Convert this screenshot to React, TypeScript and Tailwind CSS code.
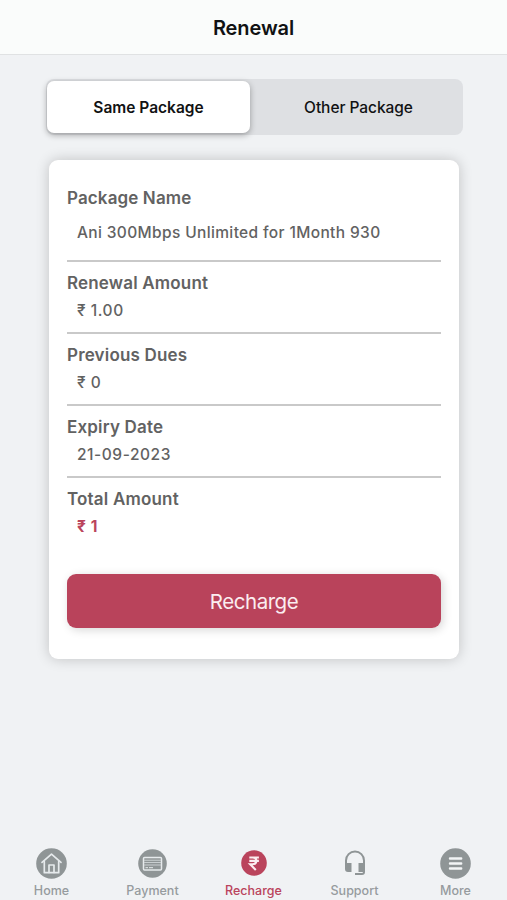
import { useState } from "react";
import type { ReactNode } from "react";

interface Detail {
  label: string;
  value: string;
}

const details: Detail[] = [
  { label: "Renewal Amount", value: "₹ 1.00" },
  { label: "Previous Dues", value: "₹ 0" },
  { label: "Expiry Date", value: "21-09-2023" },
];

function HomeIcon() {
  return (
    <svg width="31" height="31" viewBox="0 0 31 31" fill="none">
      <circle cx="15.5" cy="15.5" r="15.3" fill="#8f9596" />
      <g stroke="#e6eaec" strokeWidth="1.7" strokeLinejoin="round" strokeLinecap="round">
        <path d="M6 14.4 15.5 6.200l9.500 8.200" />
        <path d="M8.300 13.500v11.200h14.400V13.500" />
        <path d="M13 24.500v-7.500h5v7.500" />
      </g>
    </svg>
  );
}

function CardIcon() {
  return (
    <svg width="29" height="29" viewBox="0 0 29 29" fill="none">
      <circle cx="14.5" cy="14.5" r="14.3" fill="#8f9596" />
      <rect x="5.500" y="8.500" width="18" height="12.500" rx="1" stroke="#e6eaec" strokeWidth="1.500" />
      <path d="M6 11.300h17M6 13.500h17M6 16h17" stroke="#c9ced0" strokeWidth="1.100" />
      <path d="M7.500 18.700h2.500M11 18.700h4" stroke="#e6eaec" strokeWidth="1" />
    </svg>
  );
}

function RupeeIcon() {
  return (
    <svg width="26" height="26" viewBox="0 0 26 26" fill="none">
      <circle cx="13" cy="13" r="12.8" fill="#ba445c" />
      <path
        d="M8.300 7.500h9.600M8.300 10.900h9.600M8.600 7.500h3c2.600 0 3.700 1.400 3.700 3.300 0 2.100-1.500 3.500-3.900 3.500H9.200l5.600 5.700"
        stroke="#fbeef0"
        strokeWidth="2.100"
      />
    </svg>
  );
}

function HeadsetIcon() {
  return (
    <svg width="22" height="26" viewBox="0 0 22 26" fill="none">
      <path d="M2 15v-4.500a9 9 0 0 1 18 0V22c0 1.400-.8 2-2 2H11" stroke="#8f9596" strokeWidth="2" />
      <path d="M1 13h6.500v9H4a3 3 0 0 1-3-3zM14.500 13H21v9h-6.500z" fill="#8f9596" />
    </svg>
  );
}

function MenuIcon() {
  return (
    <svg width="31" height="31" viewBox="0 0 31 31" fill="none">
      <circle cx="15.5" cy="15.5" r="15.3" fill="#8f9596" />
      <path d="M10 10.500h11.200M10 15.500h11.200M10 20.500h11.200" stroke="#f3f5f6" strokeWidth="2.400" strokeLinecap="round" />
    </svg>
  );
}

interface NavItem {
  name: string;
  icon: ReactNode;
}

const navItems: NavItem[] = [
  { name: "Home", icon: <HomeIcon /> },
  { name: "Payment", icon: <CardIcon /> },
  { name: "Recharge", icon: <RupeeIcon /> },
  { name: "Support", icon: <HeadsetIcon /> },
  { name: "More", icon: <MenuIcon /> },
];

export default function App() {
  const [tab, setTab] = useState("Same Package");

  return (
    <div className="flex h-[900px] w-full flex-col bg-[#f0f2f4] font-['Inter',sans-serif]">
      {/* Header */}
      <header className="flex h-[55px] shrink-0 items-center justify-center border-b border-[#e0e2e3] bg-[#fafcfb] pt-[2px]">
        <h1 className="text-[20px] font-semibold tracking-[-0.1px] text-[#111213]">Renewal</h1>
      </header>

      <main className="flex-1">
        {/* Package switch */}
        <div className="mt-6 mr-11 ml-[46px] flex h-14 rounded-lg bg-[#dee0e3] p-px pt-[2px]">
          {["Same Package", "Other Package"].map((name) => (
            <button
              key={name}
              onClick={() => setTab(name)}
              className={`h-[52px] pt-[2px] text-[15.500px] text-[#111213] ${
                tab === name
                  ? "w-[203px] rounded-[7px] bg-white font-semibold shadow-[0_2px_6px_rgba(0,0,0,0.32)]"
                  : "flex-1 pl-[5px] font-medium tracking-[-0.05px]"
              }`}
            >
              {name}
            </button>
          ))}
        </div>

        {/* Renewal details */}
        <section className="mt-[25px] mr-12 ml-[49px] h-[499px] rounded-[9px] bg-white px-[18px] text-[#626262] shadow-[0_0_14px_rgba(0,0,0,0.2)]">
          <div className="h-[102px] border-b-2 border-[#c9c9c9] pt-[26px]">
            <p className="text-[17px] leading-6 font-semibold tracking-[0.12px]">Package Name</p>
            <p className="mt-[11px] pl-[10px] text-[15.500px] leading-6 font-[550] tracking-[0.36px]">
              Ani 300Mbps Unlimited for 1Month 930
            </p>
          </div>
          {details.map((d) => (
            <div key={d.label} className="h-[72px] border-b-2 border-[#c9c9c9] pt-[9px]">
              <p className="text-[17px] leading-6 font-semibold tracking-[0.18px]">{d.label}</p>
              <p className="mt-1 pl-[10px] text-[15.500px] leading-6 font-[550] tracking-[0.55px]">{d.value}</p>
            </div>
          ))}
          <div className="h-[96px] pt-[9px]">
            <p className="text-[17px] leading-6 font-semibold tracking-[0.18px]">Total Amount</p>
            <p className="mt-1 pl-[10px] text-[15.500px] leading-6 font-bold tracking-[0.55px] text-[#ba445c]">₹ 1</p>
          </div>
          <button className="h-[54px] w-full rounded-[9px] bg-[#b9435b] pt-[2px] text-[20.500px] tracking-[-0.45px] text-[#fbedf0] shadow-[2px_2px_10px_rgba(0,0,0,0.16)]">
            Recharge
          </button>
        </section>
      </main>

      {/* Bottom navigation */}
      <nav className="flex h-[54px] shrink-0 px-px">
        {navItems.map((item) => (
          <button
            key={item.name}
            className={`flex flex-1 flex-col items-center text-[12.500px] leading-4 font-medium ${
              item.name === "Recharge" ? "text-[#ba445c]" : "text-[#969b9e]"
            }`}
          >
            <span className="flex h-[34px] items-center">{item.icon}</span>
            <span className="mt-[3px]">{item.name}</span>
          </button>
        ))}
      </nav>
    </div>
  );
}
